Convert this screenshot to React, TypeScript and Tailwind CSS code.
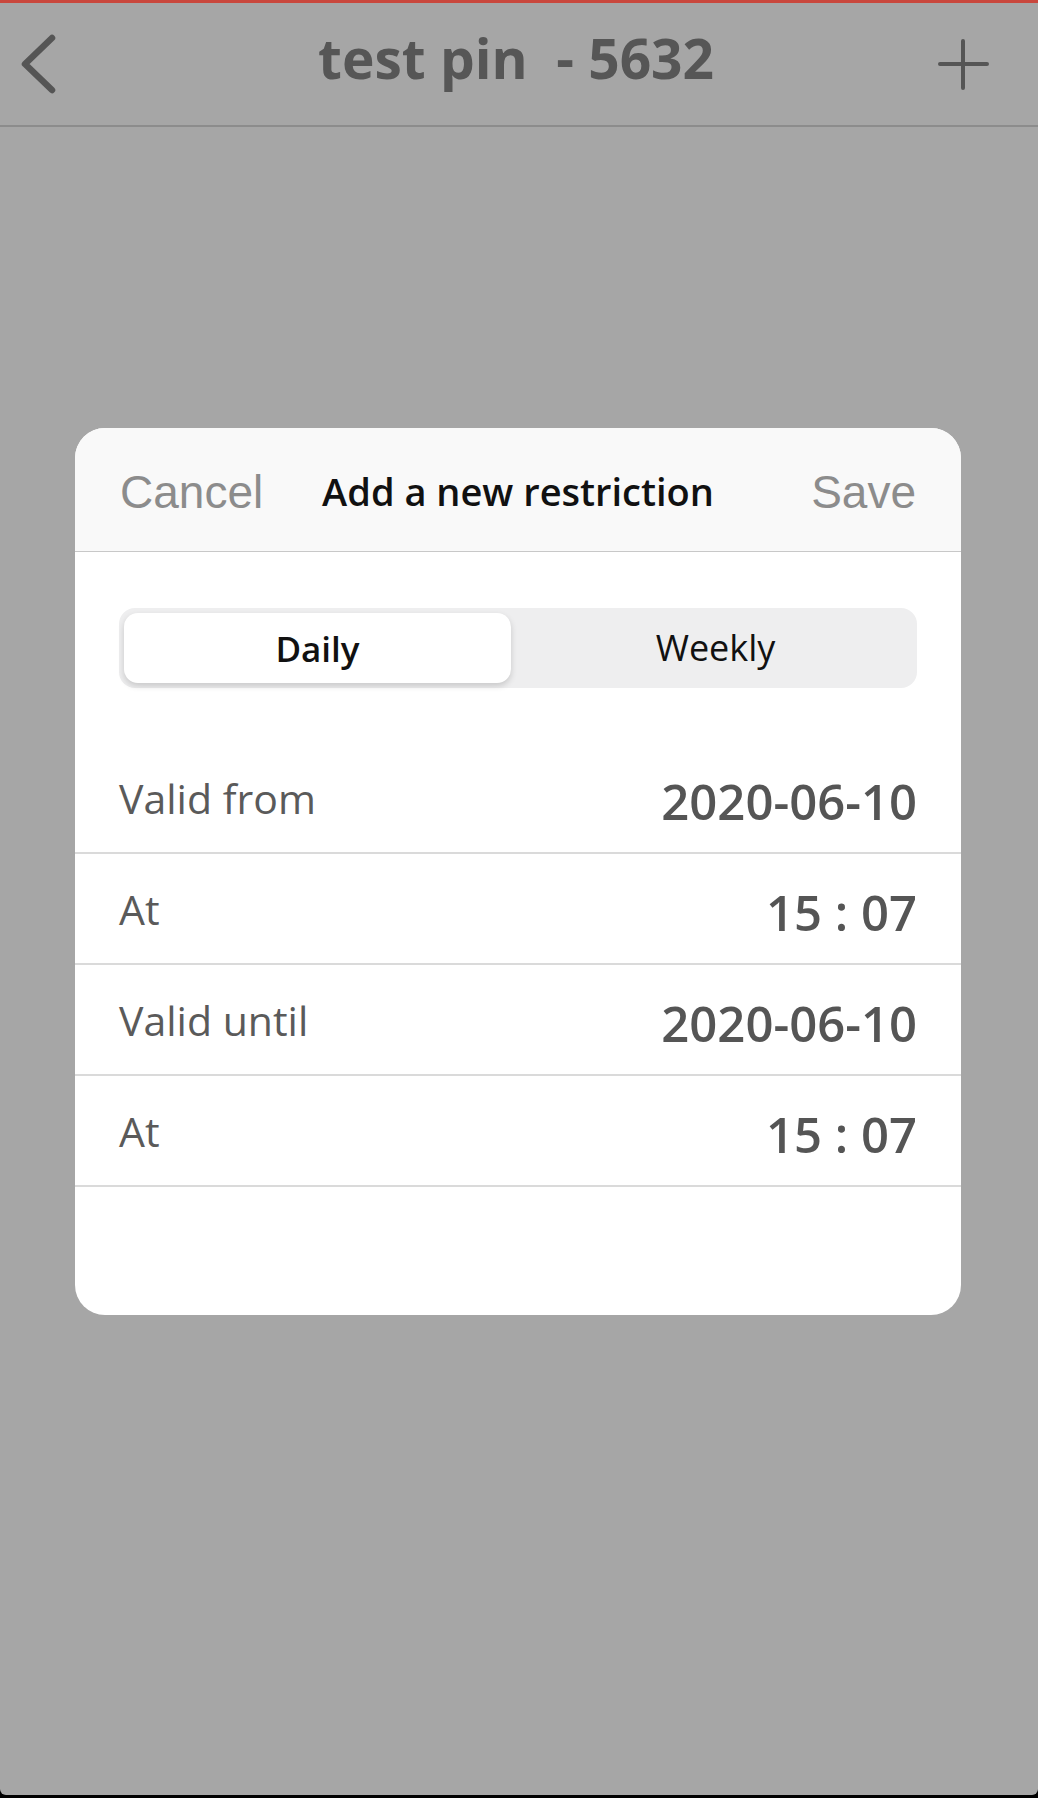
import React from "react";

const OPEN = { fontFamily: '"Open Sans", "Noto Sans", sans-serif' };
const ARIAL = { fontFamily: '"Liberation Sans", Arial, sans-serif' };

function Row({ label, value }: { label: string; value: string }) {
  return (
    <div className="flex h-[111px] items-start justify-between border-b-2 border-[#dadada] px-[44px]">
      <span className="mt-[35px] text-[41px] leading-none text-[#5a5a5a]" style={OPEN}>
        {label}
      </span>
      <span className="mt-[34px] text-[49px] font-semibold leading-none text-[#555555] whitespace-pre" style={OPEN}>
        {value}
      </span>
    </div>
  );
}

export default function App() {
  return (
    <div className="h-[1798px] w-[1038px] bg-black">
      <div className="flex h-[1795px] flex-col rounded-b-[6px] bg-[#a6a6a6]">
        <div className="h-[3px] bg-[#c9473d]" />
        <div className="flex h-[124px] items-start justify-between border-b-2 border-[#8c8c8c] pt-[29px]">
          <div className="w-[120px] pl-[18px]">
            <svg width="40" height="64" viewBox="0 0 40 64" fill="none">
              <path d="M34 6 L7 32 L34 58" stroke="#555555" strokeWidth="6.5" strokeLinecap="round" strokeLinejoin="round" />
            </svg>
          </div>
          <div className="-mt-[2px] mr-[6px] text-[55px] font-bold leading-none text-[#565656] whitespace-pre" style={OPEN}>
            {"test pin  - 5632"}
          </div>
          <div className="mt-[4px] w-[120px] pl-[17px]">
            <svg width="56" height="56" viewBox="0 0 56 56" fill="none">
              <path d="M28 5 V52 M5 28 H52" stroke="#555555" strokeWidth="4" strokeLinecap="round" />
            </svg>
          </div>
        </div>
        <div className="pt-[301px]">
          <div className="ml-[75px] w-[886px] overflow-hidden rounded-[30px] bg-white">
            <div className="grid h-[124px] grid-cols-[1fr_auto_1fr] items-center border-b border-[#c8c8c8] bg-[#f9f9f9] px-[45px]">
              <span className="mt-[4px] justify-self-start text-[46px] leading-none text-[#8c8c8c]" style={ARIAL}>
                Cancel
              </span>
              <span className="mt-[3px] text-[38px] font-semibold leading-none text-[#111111]" style={OPEN}>
                Add a new restriction
              </span>
              <span className="mt-[4px] justify-self-end text-[46px] leading-none text-[#8c8c8c]" style={ARIAL}>
                Save
              </span>
            </div>
            <div className="px-[44px] pt-[56px]">
              <div className="flex h-[80px] rounded-[16px] bg-[#eeeeef] p-[5px]">
                <div className="flex w-[387px] items-center justify-center rounded-[14px] bg-white shadow-[0_3px_6px_rgba(0,0,0,0.16)]">
                  <span className="text-[35px] font-semibold leading-none text-[#111111]" style={OPEN}>
                    Daily
                  </span>
                </div>
                <div className="flex flex-1 items-center justify-center pl-[8px]">
                  <span className="text-[36px] leading-none text-[#111111]" style={OPEN}>
                    Weekly
                  </span>
                </div>
              </div>
            </div>
            <div className="pt-[55px]">
              <Row label="Valid from" value="2020-06-10" />
              <Row label="At" value="15 : 07" />
              <Row label="Valid until" value="2020-06-10" />
              <Row label="At" value="15 : 07" />
            </div>
            <div className="h-[128px]" />
          </div>
        </div>
      </div>
    </div>
  );
}
